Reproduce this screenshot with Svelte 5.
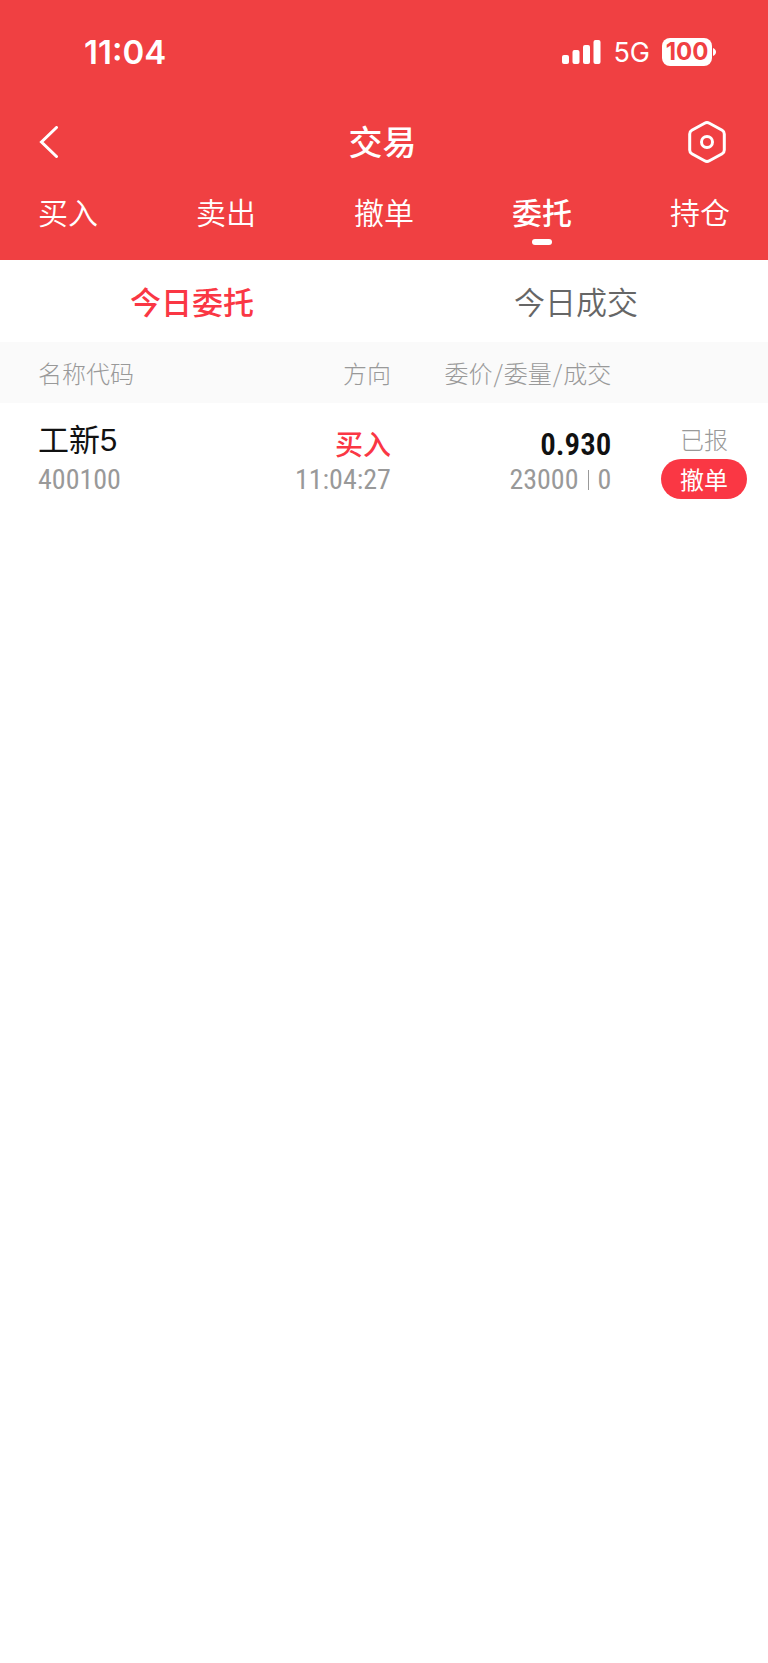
<script>
  const tabs = ["买入", "卖出", "撤单", "委托", "持仓"];
  const views = ["今日委托", "今日成交"];

  let activeTab = $state("委托");
  let activeView = $state("今日委托");

  let orders = $state([
    {
      name: "工新5",
      code: "400100",
      side: "买入",
      time: "11:04:27",
      price: "0.930",
      amount: 23000,
      filled: 0,
      status: "已报",
    },
  ]);

  function cancelOrder(order) {
    order.status = "已撤";
  }
</script>

<header class="top">
  <div class="status">
    <span class="clock">11:04</span>
    <div class="status-right">
      <svg class="signal" viewBox="0 0 39 24" aria-hidden="true">
        <rect x="0" y="15" width="7" height="9" rx="2" />
        <rect x="10.5" y="10" width="7" height="14" rx="2" />
        <rect x="21" y="5" width="7" height="19" rx="2" />
        <rect x="31.5" y="0" width="7" height="24" rx="2" />
      </svg>
      <span class="network">5G</span>
      <div class="battery">
        <span class="battery-level">100</span>
        <svg class="battery-tip" viewBox="0 0 3 8" aria-hidden="true">
          <path d="M0 0C4 1.500 4 6.500 0 8Z" />
        </svg>
      </div>
    </div>
  </div>

  <div class="titlebar">
    <button class="icon-btn" aria-label="返回">
      <svg class="back" viewBox="0 0 20 32" aria-hidden="true">
        <path d="M17.500 1.500 2.500 16 17.500 30.500" />
      </svg>
    </button>
    <h1>交易</h1>
    <button class="icon-btn" aria-label="设置">
      <svg class="gear" viewBox="0 0 38 42" aria-hidden="true">
        <path d="M16.600 2.200Q19 0.900 21.400 2.200L34.200 9.300Q36.300 10.500 36.300 13V29Q36.300 31.500 34.200 32.700L21.400 39.800Q19 41.100 16.600 39.800L3.800 32.700Q1.700 31.500 1.700 29V13Q1.700 10.500 3.800 9.300Z" />
        <circle cx="19" cy="21" r="5.500" />
      </svg>
    </button>
  </div>

  <nav class="tabs">
    {#each tabs as tab}
      <button class="tab" class:active={tab === activeTab} onclick={() => (activeTab = tab)}>
        {tab}
      </button>
    {/each}
  </nav>
</header>

<main>
  <div class="views">
    {#each views as view}
      <button class="view" class:active={view === activeView} onclick={() => (activeView = view)}>
        {view}
      </button>
    {/each}
  </div>

  <table>
    <thead>
      <tr>
        <th class="col-name">名称代码</th>
        <th class="col-side">方向</th>
        <th class="col-price">委价<span class="slash">/</span>委量<span class="slash">/</span>成交</th>
        <td class="col-action"></td>
      </tr>
    </thead>
    <tbody>
      {#each orders as order}
        <tr>
          <td class="col-name">
            <div class="name">{order.name}</div>
            <div class="sub">{order.code}</div>
          </td>
          <td class="col-side">
            <div class="side">{order.side}</div>
            <div class="sub">{order.time}</div>
          </td>
          <td class="col-price">
            <div class="price">{order.price}</div>
            <div class="sub amounts">
              <span>{order.amount}</span>
              <i class="bar"></i>
              <span>{order.filled}</span>
            </div>
          </td>
          <td class="col-action">
            <div class="state">{order.status}</div>
            <button class="cancel" onclick={() => cancelOrder(order)}>撤单</button>
          </td>
        </tr>
      {/each}
    </tbody>
  </table>
</main>

<style>
  :global(body) {
    background: #fff;
    color: #111;
    font-family: "Noto Sans CJK SC", sans-serif;
  }

  button {
    border: 0;
    padding: 0;
    background: none;
    color: inherit;
    font: inherit;
    cursor: pointer;
  }

  svg {
    display: block;
  }

  .top {
    background: #f04042;
    color: #fff;
  }

  .status {
    display: flex;
    justify-content: space-between;
    align-items: center;
    height: 104px;
    padding: 0 52px 0 84px;
    font-family: Inter, sans-serif;
  }

  .clock {
    font-size: 33px;
    font-weight: 600;
  }

  .status-right {
    display: flex;
    align-items: center;
    gap: 12px;
  }

  .signal {
    width: 39px;
    height: 24px;
    fill: #fff;
  }

  .network {
    font-size: 27px;
  }

  .battery {
    display: flex;
    align-items: center;
    gap: 1px;
  }

  .battery-level {
    width: 50px;
    border-radius: 8px;
    background: #fff;
    color: #f04042;
    font-size: 24px;
    font-weight: 700;
    line-height: 28px;
    text-align: center;
  }

  .battery-tip {
    width: 3px;
    height: 8px;
    fill: #fff;
  }

  .titlebar {
    display: flex;
    justify-content: space-between;
    align-items: center;
    height: 76px;
    padding: 0 42px 0 39px;
  }

  .icon-btn {
    display: flex;
    width: 40px;
  }

  .icon-btn:last-child {
    justify-content: flex-end;
  }

  .back {
    width: 20px;
    height: 32px;
    fill: none;
    stroke: #fff;
    stroke-width: 3;
    stroke-linecap: round;
  }

  .gear {
    width: 38px;
    height: 42px;
    fill: none;
    stroke: #fff;
    stroke-width: 3;
  }

  h1 {
    margin: 0;
    padding-bottom: 2px;
    font-size: 34px;
    font-weight: 500;
    line-height: 48px;
  }

  .tabs {
    display: flex;
    justify-content: space-between;
    height: 80px;
    padding: 0 38px;
  }

  .tab {
    display: flex;
    flex-direction: column;
    align-items: center;
    gap: 6px;
    padding-top: 9px;
    font-size: 30px;
    font-weight: 350;
    line-height: 44px;
  }

  .tab.active {
    font-weight: 500;
  }

  .tab.active::after {
    content: "";
    width: 20px;
    height: 6px;
    border-radius: 3px;
    background: #fff;
  }

  .views {
    display: grid;
    grid-template-columns: 1fr 1fr;
    height: 82px;
  }

  .view {
    color: #666;
    font-size: 31px;
    font-weight: 350;
    line-height: 82px;
  }

  .view.active {
    color: #fa3744;
    font-weight: 500;
  }

  table {
    width: 100%;
    border-collapse: collapse;
    table-layout: fixed;
  }

  thead tr {
    height: 61px;
    background: #fafafa;
  }

  th {
    padding: 0;
    color: #999;
    font-size: 24px;
    font-weight: 300;
    line-height: 36px;
    white-space: nowrap;
  }

  td {
    padding: 0;
    vertical-align: bottom;
  }

  tbody td {
    padding-top: 16px;
  }

  .col-name {
    width: 28%;
    padding-left: 38px;
    text-align: left;
    box-sizing: border-box;
  }

  .col-side {
    text-align: right;
  }

  .col-price {
    width: 28.7%;
    text-align: right;
    box-sizing: border-box;
  }

  .col-action {
    width: 20.4%;
    padding-right: 21px;
    text-align: right;
    box-sizing: border-box;
  }

  .slash {
    margin: 0 1px;
  }

  .name {
    font-family: "Liberation Sans", "Noto Sans CJK SC", sans-serif;
    font-size: 31px;
    line-height: 40px;
  }

  .side {
    color: #fa3744;
    font-size: 28px;
    font-weight: 500;
    line-height: 36px;
  }

  .price {
    font-family: "Roboto Condensed", "Liberation Sans Narrow", Roboto, sans-serif;
    font-size: 31px;
    font-weight: 600;
    line-height: 32px;
  }

  .sub {
    color: #999;
    font-family: "Roboto Condensed", "Liberation Sans Narrow", Roboto, sans-serif;
    font-size: 28px;
    line-height: 38px;
  }

  .amounts {
    display: flex;
    justify-content: flex-end;
    align-items: center;
    gap: 9px;
  }

  .bar {
    width: 1px;
    height: 20px;
    background: #999;
  }

  .state {
    width: 86px;
    margin-left: auto;
    color: #999;
    font-size: 24px;
    font-weight: 300;
    line-height: 40px;
    text-align: center;
  }

  .cancel {
    width: 86px;
    border-radius: 20px;
    background: #fa3744;
    color: #fff;
    font-size: 24px;
    line-height: 40px;
  }
</style>
